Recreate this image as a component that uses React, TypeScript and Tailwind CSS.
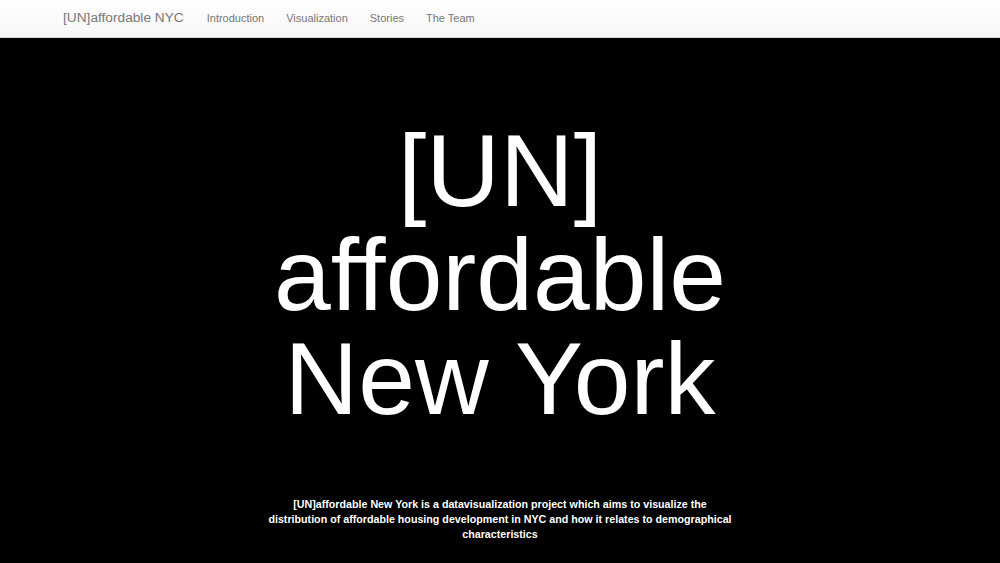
import React from 'react';

const links = ['Introduction', 'Visualization', 'Stories', 'The Team'];

const App: React.FC = () => {
  return (
    <div className="min-h-screen bg-black" style={{ fontFamily: '"Liberation Sans", Arial, sans-serif' }}>
      {/* Navbar */}
      <nav className="h-[38px] bg-gradient-to-b from-white to-[#f6f6f6] border-b border-[#d4d4d4] flex items-center pl-[63px]">
        <a className="text-[13.7px] text-[#777] mr-[12px]">[UN]affordable NYC</a>
        <ul className="flex items-center">
          {links.map((l) => (
            <li key={l} className="px-[11px] text-[11px] text-[#777]">
              {l}
            </li>
          ))}
        </ul>
      </nav>

      {/* Hero */}
      <main className="flex flex-col items-center">
        <h1 className="mt-[81px] text-white text-[102px] leading-[104px] font-normal text-center">
          [UN]
          <br />
          affordable
          <br />
          New York
        </h1>
        <p className="mt-[66px] w-[472px] text-center text-white font-bold text-[10.7px] leading-[15px]">
          [UN]affordable New York is a datavisualization project which aims to visualize the distribution of
          affordable housing development in NYC and how it relates to demographical characteristics
        </p>
      </main>
    </div>
  );
};

export default App;
